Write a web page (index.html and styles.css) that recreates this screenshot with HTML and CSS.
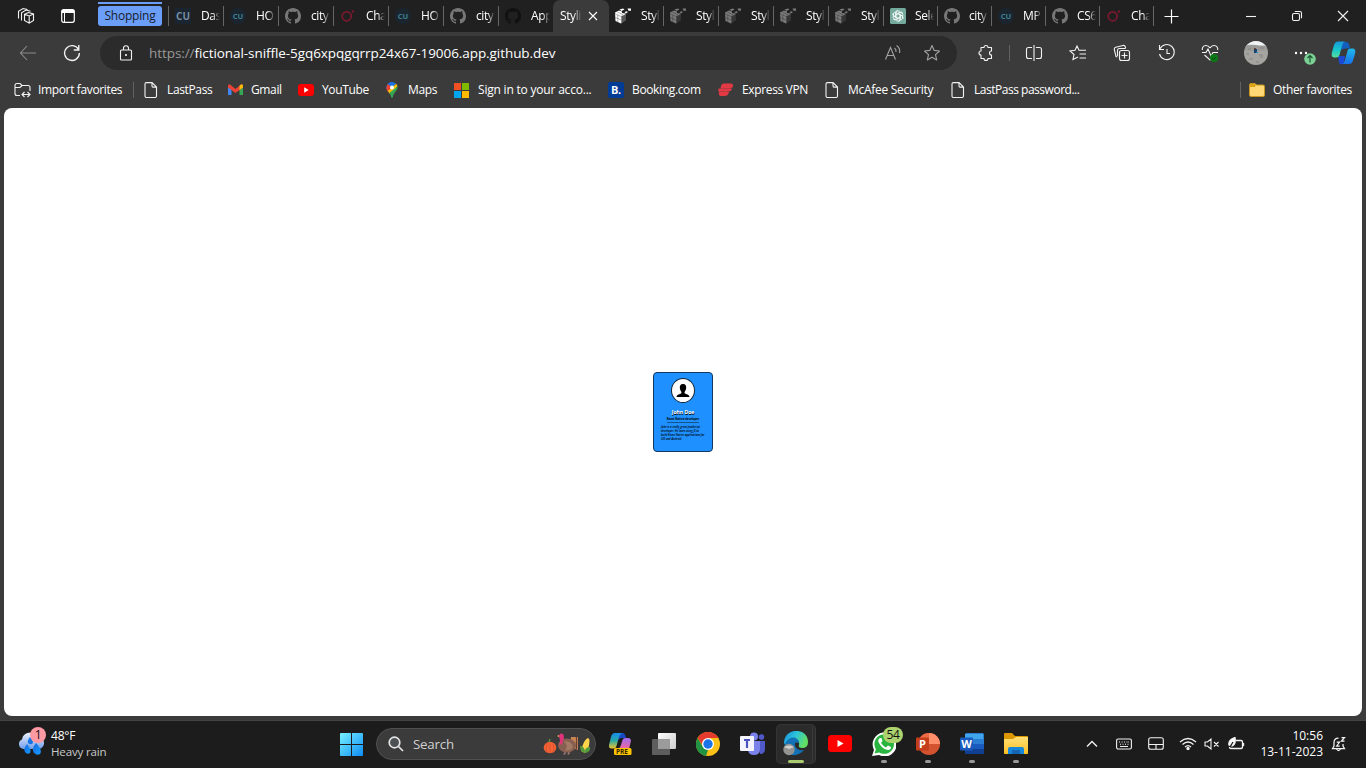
FILE: index.html
```html
<!DOCTYPE html>
<html lang="en">
<head>
<meta charset="utf-8">
<title>Styling</title>
<link rel="stylesheet" href="styles.css">
</head>
<body>
<svg class="defs" width="0" height="0" aria-hidden="true">
  <defs>
    <linearGradient id="gWin" x2="1" y2="1"><stop stop-color="#77f2ff"/><stop offset="1" stop-color="#0d8cf5"/></linearGradient>
    <linearGradient id="gTeal" x2="0" y2="1"><stop stop-color="#1797d8"/><stop offset=".5" stop-color="#17c5cf"/><stop offset="1" stop-color="#55df9a"/></linearGradient>
    <linearGradient id="gBlue" x2="0" y2="1"><stop stop-color="#1fbbe9"/><stop offset="1" stop-color="#1970ea"/></linearGradient>
    <linearGradient id="gPre" x2="0" y2="1"><stop stop-color="#168cec"/><stop offset=".5" stop-color="#2aa9a3"/><stop offset="1" stop-color="#f2c52c"/></linearGradient>
    <linearGradient id="gPink" x2="0" y2="1"><stop stop-color="#a16bf0"/><stop offset="1" stop-color="#ef679c"/></linearGradient>
    <linearGradient id="gEdge" x2="1" y2=".4"><stop stop-color="#168bd9"/><stop offset=".5" stop-color="#2bc3dc"/><stop offset="1" stop-color="#62df63"/></linearGradient>
    <linearGradient id="gCloud" x2="0" y2="1"><stop stop-color="#edf4ff"/><stop offset="1" stop-color="#729ce9"/></linearGradient>
    <linearGradient id="gDrop" x2="1" y2="1"><stop stop-color="#1768dc"/><stop offset="1" stop-color="#159cff"/></linearGradient>
    <linearGradient id="gFold" x2="0" y2="1"><stop stop-color="#ffdf74"/><stop offset="1" stop-color="#ffbf24"/></linearGradient>
    <linearGradient id="gGray" x2="1" y2="1"><stop stop-color="#fff"/><stop offset="1" stop-color="#ccc"/></linearGradient>
    <symbol id="github" viewBox="0 0 16 16"><path d="M8 0C3.58 0 0 3.58 0 8c0 3.54 2.29 6.53 5.47 7.59.4.07.55-.17.55-.38 0-.19-.01-.82-.01-1.49-2.01.37-2.53-.49-2.69-.94-.09-.23-.48-.94-.82-1.13-.28-.15-.68-.52-.01-.53.63-.01 1.08.58 1.23.82.72 1.21 1.87.87 2.33.66.07-.52.28-.87.51-1.07-1.78-.2-3.64-.89-3.64-3.95 0-.87.31-1.59.82-2.15-.08-.2-.36-1.02.08-2.12 0 0 .67-.21 2.2.82.64-.18 1.32-.27 2-.27s1.36.09 2 .27c1.53-1.04 2.2-.82 2.2-.82.44 1.1.16 1.92.08 2.12.51.56.82 1.27.82 2.15 0 3.07-1.87 3.75-3.65 3.95.29.25.54.73.54 1.48 0 1.07-.01 1.93-.01 2.2 0 .21.15.46.55.38A8.01 8.01 0 0 0 16 8c0-4.42-3.58-8-8-8z"/></symbol>
    <symbol id="cube" viewBox="0 0 16 16"><path fill="currentColor" d="M0 4.500 4 2.500l3 1v1.500l3.500.500v7L6 15.500l-5.500-2.500zM4.500 1.500 8 .500l1.500 1-3 1.500zM9.500 4l2-.800 1.500.800-2 1.500zM12.500.500H16v2.300h-2.500z"/><path d="M6.300 8.500l4.400-2v6.700L6.300 15.500z" fill="#202020" opacity=".75"/><path d="M0 5.700 6 8.500l4.500-2M.5 9.500 6 12M2.800 7v7M2.500 4.200l5.500 2.500" fill="none" stroke="#202020" stroke-width=".35"/></symbol>
    <symbol id="ring" viewBox="0 0 16 16"><circle cx="6.700" cy="8.300" r="4.500" fill="none" stroke="#7b1830" stroke-width="1.800"/><circle cx="13" cy="3.500" r="1.200" fill="#7b1830"/></symbol>
    <symbol id="file" viewBox="0 0 16 16"><path d="M3.500.6h5.500l4.500 4.500v8.900a1.500 1.500 0 0 1-1.500 1.500H3.500A1.500 1.500 0 0 1 2 14V2.100A1.500 1.500 0 0 1 3.500.6zM9 .8v3.300a1 1 0 0 0 1 1h3.300" fill="none" stroke="#f2f2f2" stroke-width="1.100"/></symbol>
  </defs>
</svg>

<header class="tabstrip">
  <div class="strip-icon"><svg class="line" width="18" height="18" viewBox="0 0 18 18"><path d="m7.500 7.300 4-1.800 5 1.500v6.500l-4.300 2.700-4.700-2.700zM7.500 7.300l4.700 1.700 4.300-2M12.200 9v7M4.500 13.500V5.700L9 3l4.500 1.300M1.500 11.500V4.200L6 1.500l4.500 1"/></svg></div>
  <div class="strip-icon"><svg width="16" height="16" viewBox="0 0 16 16"><rect x="1.700" y="1.700" width="12.600" height="12.600" rx="2" fill="none" stroke="#fff" stroke-width="1.200"/><path d="M1.500 3.500q0-2 2-2h9q2 0 2 2V5h-13zM4 5h1v9H4z" fill="#fff"/></svg></div>
  <div class="group"><span>Shopping</span></div>
  <nav class="tabs">
    <div class="tab"><i class="cu big">CU</i><span>Das</span></div>
    <div class="tab"><i class="cu">CU</i><span>HO</span></div>
    <div class="tab"><svg class="fav gh"><use href="#github"/></svg><span>city</span></div>
    <div class="tab"><svg class="fav"><use href="#ring"/></svg><span>Cha</span></div>
    <div class="tab"><i class="cu">CU</i><span>HO</span></div>
    <div class="tab"><svg class="fav gh"><use href="#github"/></svg><span>city</span></div>
    <div class="tab"><svg class="fav gh dark"><use href="#github"/></svg><span>App</span></div>
    <div class="tab active"><span>Styli</span><svg width="10" height="10" viewBox="0 0 10 10"><path d="m1 1 8 8M9 1 1 9" stroke="#fff" stroke-width="1.100"/></svg></div>
    <div class="tab nosep"><svg class="fav bright"><use href="#cube"/></svg><span>Styl</span></div>
    <div class="tab"><svg class="fav dim"><use href="#cube"/></svg><span>Styl</span></div>
    <div class="tab"><svg class="fav dim"><use href="#cube"/></svg><span>Styl</span></div>
    <div class="tab"><svg class="fav dim"><use href="#cube"/></svg><span>Styl</span></div>
    <div class="tab"><svg class="fav dim"><use href="#cube"/></svg><span>Styl</span></div>
    <div class="tab narrow"><svg class="fav" viewBox="0 0 16 16"><rect width="16" height="16" rx="1.500" fill="#74aa9c"/><g fill="none" stroke="#fff" stroke-width=".8"><path id="petal" d="M6 9V5.200a2.300 2.300 0 0 1 4.300-1.100M6 6.500l3.500-2q2-1 3.300.4"/><use href="#petal" transform="rotate(60 8 8)"/><use href="#petal" transform="rotate(120 8 8)"/><use href="#petal" transform="rotate(180 8 8)"/><use href="#petal" transform="rotate(240 8 8)"/><use href="#petal" transform="rotate(300 8 8)"/></g></svg><span>Sele</span></div>
    <div class="tab narrow"><svg class="fav gh"><use href="#github"/></svg><span>city</span></div>
    <div class="tab narrow"><i class="cu">CU</i><span>MP</span></div>
    <div class="tab narrow"><svg class="fav gh"><use href="#github"/></svg><span>CS6</span></div>
    <div class="tab narrow"><svg class="fav"><use href="#ring"/></svg><span>Cha</span></div>
    <div class="tab-end"></div>
  </nav>
  <div class="newtab"><svg width="15" height="15" viewBox="0 0 15 15"><path d="M7.500.5v14M.5 7.500h14" stroke="#fff" stroke-width="1.200"/></svg></div>
  <div class="window-controls">
    <svg class="line" width="12" height="12" viewBox="0 0 12 12"><path d="M1 6.500h10"/></svg>
    <svg class="line" width="12" height="12" viewBox="0 0 12 12"><rect x="1.500" y="3.500" width="7" height="7" rx="1.500"/><path d="M3.800 1.500H9q1.500 0 1.500 1.500v5.200"/></svg>
    <svg class="line" width="12" height="12" viewBox="0 0 12 12"><path d="m1 1 10 10M11 1 1 11"/></svg>
  </div>
</header>

<div class="toolbar">
  <div class="tool"><svg width="18" height="16" viewBox="0 0 18 16"><path d="M8 1 1.500 8 8 15M1.500 8H17" fill="none" stroke="#8b8b8b" stroke-width="1.100"/></svg></div>
  <div class="tool"><svg class="line thick" width="18" height="18" viewBox="0 0 18 18"><path d="M15.500 5.500A7.400 7.400 0 1 0 16.400 9M15.800 1v5h-5"/></svg></div>
  <div class="address">
    <svg class="line" width="14" height="18" viewBox="0 0 14 18"><rect x="1.500" y="6" width="11" height="10" rx="1"/><path d="M4.500 6V4.200a2.500 2.500 0 0 1 5 0V6"/><circle cx="7" cy="11" r=".5" fill="#fff"/></svg>
    <p><span>https://</span>fictional-sniffle-5gq6xpqgqrrp24x67-19006.app.github.dev</p>
    <svg class="line soft read" width="18" height="18" viewBox="0 0 18 18"><path d="M1.500 15.500 6.500 3.500l5 12M3.200 11.500h6.600M10.500 4q2 1.500 1.500 4M12.500 1.500q4 2.500 3 7.500"/></svg>
    <svg class="line soft" width="18" height="18" viewBox="0 0 18 18"><path d="m9 1.500 2.200 4.900 5.300.6-4 3.600 1.200 5.400L9 13.300 4.300 16l1.200-5.400-4-3.600 5.300-.6z" stroke-linejoin="round"/></svg>
  </div>
  <div class="tool after-address"><svg class="line" width="18" height="18" viewBox="0 0 18 18"><path d="M4 3.500h3a2 2 0 0 1 4 0h3.500V7a2 2 0 0 0 0 4v3.500H11a2 2 0 0 1-4 0H4V11a2 2 0 0 1 0-4z" stroke-linejoin="round"/></svg></div>
  <div class="divider"></div>
  <div class="tool"><svg class="line" width="18" height="18" viewBox="0 0 18 18"><path d="M9 1v16M7 3.500H3.500q-2 0-2 2v7q0 2 2 2H7M11 3.500h3.500q2 0 2 2v7q0 2-2 2H11"/></svg></div>
  <div class="tool"><svg class="line" width="18" height="18" viewBox="0 0 18 18"><path d="M9 13 4 15.500 5 10.500 1 7l5-.8L8 2l2 4.200H17M10.500 10H17M10.500 14H17"/></svg></div>
  <div class="tool"><svg class="line" width="18" height="18" viewBox="0 0 18 18"><rect x="6.500" y="6.500" width="10" height="10" rx="2"/><path d="M11.500 8.500v6M8.500 11.500h6M4.500 13 3 12.500 1.300 5.500q-.3-1.700 1.400-2.200L10 1.500q1.800-.4 2.300 1.300l.4 1.500M4.500 12V6.500q0-2 2-2h6"/></svg></div>
  <div class="tool history"><svg class="line" width="18" height="18" viewBox="0 0 18 18"><path d="M2 4.800A7.500 7.500 0 1 1 1.500 10M1.500 1v4.500H6M9 5v4.500h3"/></svg></div>
  <div class="tool overlay-host"><svg class="line" width="18" height="18" viewBox="0 0 18 18"><path d="M9 4Q7.500 1.500 5 1.500C2 1.500 1 4 1.300 6M9 4q1.500-2.500 4-2.500c3 0 4 2.500 3.700 4.500M1 8.500h4l2-3.500 3 7 2-3.500h5M3.500 11 9 16l3-3"/></svg><svg class="okay" width="8" height="8" viewBox="0 0 8 8"><circle cx="4" cy="4" r="4" fill="#0a7a16"/><path d="m2 4 1.500 1.500L6 3" fill="none" stroke="#063e0c"/></svg></div>
  <div class="tool avatar-slot"><svg class="avatar" width="24" height="24" viewBox="0 0 24 24"><path d="M0 0h24v24H0z" fill="#a5a4a1"/><path d="M0 0h24v5H0z" fill="#f0f3f5"/><path d="M0 5q5-2 12-1t12 0v5q-12 2-24 0z" fill="#9a9b98"/><path d="M2 13h3m10 1h4M5 18h4m3 3h3m1-5h3M4 8h3m9-1h4" stroke="#858481"/><path d="M10 8h3v4h-3z" fill="#16447a"/><path d="M12 11h2v1h-2z" fill="#1e8ccc"/><circle cx="11" cy="8" r="1" fill="#493027"/></svg></div>
  <div class="tool overlay-host"><svg width="14" height="4" viewBox="0 0 14 4"><g fill="#fff"><circle cx="2" cy="2" r="1.200"/><circle cx="7" cy="2" r="1.200"/><circle cx="12" cy="2" r="1.200"/></g></svg><svg class="update" width="12" height="12" viewBox="0 0 12 12"><circle cx="6" cy="6" r="5.800" fill="#7bd096"/><path d="M6 9.500v-7M3.500 5 6 2.500 8.500 5" fill="none" stroke="#1d5631" stroke-width="1.200"/></svg></div>
  <div class="copilot"><svg width="25" height="24" viewBox="0 0 25 24"><path d="M11 1h4q2.500 0 3.300 3L19 7.500h-5L9 9z" fill="#135fbd"/><path d="M7 15h7l-1 6q-.7 2.500-2.500 2.500Q8.500 23.500 8 21z" fill="#1b48d6"/><path d="M7 .5h7q-2 .5-3 4L8.500 14Q7.800 16.500 5 16.500H3.500Q0 16.500.8 12L3 4Q4 .5 7 .5z" fill="url(#gTeal)"/><path d="M18 23h-7q2-.5 3-4l2.500-9Q17 7.500 20 7.500h1.500q3.500 0 2.700 4.500L22 19.500q-1 3.500-4 3.500z" fill="url(#gBlue)"/></svg></div>
</div>

<nav class="bookmarks">
  <a class="w-import"><svg class="line" width="17" height="16" viewBox="0 0 17 16"><path d="M6 13.500H3q-2 0-2-2v-8q0-2 2-2h3l2 2h6q2 0 2 2V9M1 5.500h5l2-2M8 12.500h8M10.500 10 8 12.500l2.500 2.500m3-5 2.500 2.500-2.500 2.500"/></svg>Import favorites</a>
  <div class="mark-divider"></div>
  <a class="w-last"><svg width="16" height="16"><use href="#file"/></svg>LastPass</a>
  <a class="w-gmail"><svg width="15" height="12" viewBox="0 0 15 12"><path d="M0 2v9h3.500V5z" fill="#4285f4"/><path d="M11.500 5v6H15V2z" fill="#34a853"/><path d="M0 2q0-2 2-1.600L7.500 5 13 .4Q15 0 15 2v1.500L7.500 9 0 3.500z" fill="#ea4335"/><path d="M11.500 1.700 13 .4Q15 0 15 2v1.500l-3.500 2.600z" fill="#fbbc04"/></svg>Gmail</a>
  <a class="w-youtube"><svg width="16" height="12" viewBox="0 0 16 12"><rect width="16" height="12" rx="3" fill="#f00"/><path d="m6.200 3.300 4.500 2.700-4.500 2.700z" fill="#fff"/></svg>YouTube</a>
  <a class="w-maps"><svg width="16" height="16" viewBox="0 0 16 16"><path d="M8 0a5.500 5.500 0 0 0-4.300 9L12 1.700A5.400 5.400 0 0 0 8 0z" fill="#1a73e8"/><path d="M4 2 8 5.500 3.700 9.500A5.500 5.500 0 0 1 4 2z" fill="#ea4335"/><path d="m3.700 9 8.500-7.200q1.200 1.500 1.200 3L6 12z" fill="#fbbc04"/><path d="M13.400 4.500C14 9 9.500 10 8.700 15.500q-.7.700-1.400 0Q7 12.800 5.300 11z" fill="#34a853"/><circle cx="8" cy="5.500" r="2" fill="#fff"/></svg>Maps</a>
  <a class="w-ms"><svg width="15" height="15" viewBox="0 0 16 16"><path d="M0 0h7.500v7.500H0z" fill="#f25022"/><path d="M8.500 0H16v7.500H8.500z" fill="#7fba00"/><path d="M0 8.500h7.500V16H0z" fill="#00a4ef"/><path d="M8.500 8.500H16V16H8.500z" fill="#ffb900"/></svg>Sign in to your acco...</a>
  <a class="w-booking"><b class="booking">B.</b>Booking.com</a>
  <a class="w-express"><svg width="16" height="14" viewBox="0 0 16 14"><path d="M6 .5h6.500q3 0 2.500 2.700-.4 2-3 2H2.500Q3 .5 6 .5zM1 5.500h13q-.5 3-4 3H.5Q0 5.500 1 5.500zM1 8.800h10q-.5 4.200-4.500 4.200H3Q.3 13 1 8.800z" fill="#e23a45"/></svg>Express VPN</a>
  <a class="w-mcafee"><svg width="16" height="16"><use href="#file"/></svg>McAfee Security</a>
  <a class="w-password"><svg width="16" height="16"><use href="#file"/></svg>LastPass password...</a>
  <a class="other"><svg width="16" height="14" viewBox="0 0 16 14"><path d="M.5 2Q.5.500 2 .500h4l1.500 1.500H14q1.500 0 1.500 1.500v8.500q0 1.500-1.500 1.500H2Q.5 13.500.5 12z" fill="#ffd875" stroke="#c6961f"/><path d="M1 1h5l1 1-1 2H1z" fill="#dda319"/></svg>Other favorites</a>
</nav>

<main class="viewport">
  <article class="card">
    <div class="portrait"><svg width="16" height="16" viewBox="0 0 16 16"><path d="M8 1c-2.600 0-3.600 2-3.100 4.500.3 1.700 1 2.600 1.500 3.500v1.200C5 11.200 1.600 11.500 1.500 14h13c-.1-2.500-3.500-2.800-4.900-3.800V9c.5-.9 1.200-1.800 1.500-3.500C11.600 3 10.600 1 8 1z"/></svg></div>
    <h1>John Doe</h1>
    <h2>React Native developer</h2>
    <p>John is a really great JavaScript<br>developer. He loves using JS to<br>build React Native applications for<br>iOS and Android</p>
  </article>
</main>

<footer class="taskbar">
  <div class="weather">
    <div class="weather-icon"><svg width="26" height="24" viewBox="0 0 26 24"><path d="M5 17a5 5 0 0 1-1-9.500A8 8 0 0 1 19 5a6 6 0 0 1 2 12z" fill="url(#gCloud)"/><path d="M9 12q-4 5-2 8 2 3 5 1 2-3-3-9z" fill="url(#gDrop)"/><path d="M18 11q-5 6-2 10 3 3 6 1 3-4-4-11z" fill="url(#gDrop)"/><path d="M12 5q-4 5-1 7 4 1 4-2 0-2-3-5z" fill="#1675e4"/></svg><b>1</b></div>
    <p>48°F<br><span>Heavy rain</span></p>
  </div>
  <div class="start"><svg width="23" height="23" viewBox="0 0 23 23"><path d="M0 1q0-1 1-1h10v11H0zm12-1h10q1 0 1 1v10H12zM0 12h11v11H1q-1 0-1-1zm12 0h11v10q0 1-1 1H12z" fill="url(#gWin)"/></svg></div>
  <div class="search">
    <svg width="16" height="16" viewBox="0 0 16 16"><circle cx="6.500" cy="6.500" r="5.300" fill="#4b5154" stroke="#e5e5e5" stroke-width="1.700"/><path d="m10.500 10.500 4.500 4.500" stroke="#e5e5e5" stroke-width="1.700"/></svg>
    <span>Search</span>
    <svg class="harvest" width="48" height="24" viewBox="0 0 48 24"><ellipse cx="7" cy="15.500" rx="6.300" ry="5.800" fill="#f16335"/><path d="M7 11v10M4 11q-2 5 0 10M10 11q2 5 0 10" fill="none" stroke="#d94b2b" stroke-width=".7"/><path d="m6 10 1-3" stroke="#588d3b" stroke-width="1.500"/><path d="M28 5h7v13l-8-3z" fill="#c98554"/><path d="M33.500 5v12" stroke="#673e36" stroke-width="1.200"/><ellipse cx="24" cy="13.500" rx="9" ry="7" fill="#876052"/><path d="M21 9q8 0 9 6-3 5-8 3 4-4-1-9z" fill="#a37a63"/><path d="M16 13q2-4 0-8 0-5 4-3 2 3 0 7l-1 3z" fill="#de3279"/><path d="m16 3-2 1 2 1z" fill="#ebbc43"/><path d="M22 20v2h-1.500M26 20v2h-1.500" fill="none" stroke="#c28b89"/><path d="M38 19q3-12 7-13 3 1 0 11l-3 4z" fill="#ffd44a"/><path d="M37 14q5 0 5 7-5-1-5-7zM47 15q-6 0-5 6 6-1 5-6z" fill="#549c3b"/></svg>
  </div>
  <div class="apps">
    <div class="app"><svg width="24" height="24" viewBox="0 0 24 24"><path d="M11 1h4q2 0 3 5h-5l-4 2z" fill="#1749c4"/><path d="M7 1h7q-2 1-3 4L8.500 14q-.7 2.500-3 2.500h-2Q.500 16.500 1 13l2-8q1-4 4-4z" fill="url(#gPre)"/><path d="M12 17h-2q2-1 3-4l1.500-5q.6-2 3-2H20q3.500 0 2.800 3.500L21 17z" fill="url(#gPink)"/><path d="M7.500 16H22q1.500 0 1.500 1.500v4Q23.500 23 22 23H7.500Q6 23 6 21.500v-4Q6 16 7.500 16z" fill="#ffc400"/><text x="8" y="22" class="pre">PRE</text></svg></div>
    <div class="app"><svg width="24" height="24" viewBox="0 0 24 24"><rect y="7" width="18" height="16" rx="1" fill="#5d5d5d"/><rect x="6" y="1" width="18" height="16" rx="1" fill="url(#gGray)"/><path d="M6 7h12v10H6z" fill="#9b9b9b"/></svg></div>
    <div class="app"><svg width="24" height="24" viewBox="0 0 24 24"><circle cx="12" cy="12" r="12" fill="#fbc116"/><path d="M1.600 6a12 12 0 0 1 20.800 0H12L7 14z" fill="#e33b2e"/><path d="M1.600 6 7 15l5 3-2 6A12 12 0 0 1 1.600 6z" fill="#229342"/><circle cx="12" cy="12" r="6" fill="#fff"/><circle cx="12" cy="12" r="4.700" fill="#1a73e8"/></svg></div>
    <div class="app"><svg width="25" height="24" viewBox="0 0 25 24"><circle cx="14" cy="4.500" r="4" fill="#7b83eb"/><circle cx="21.500" cy="5" r="2.800" fill="#5059c9"/><path d="M18 9h7v8q0 5-5 5z" fill="#5059c9"/><path d="M8 9h12v8q0 6-6 6t-6-6z" fill="#7b83eb"/><rect y="4" width="14" height="15" rx="1" fill="#f5f5ff"/><path d="M4 8h6M7 8v8" stroke="#4b53bc" stroke-width="2.200"/></svg></div>
    <div class="app selected"><svg width="25" height="25" viewBox="0 0 25 25"><path d="M1 12C1-4 25-4 25 11q0 6-6 6-4 0-3-3 1-5-4-6-7 0-9 8z" fill="url(#gEdge)"/><path d="M2 14C4 5 15 4 16 12q-5-2-4 3 2 5 9 4-5 6-12 5Q1 22 2 14z" fill="#1272b5"/><circle cx="6" cy="18.500" r="5.700" fill="#939391"/><path d="M1 16q5-3 10 0l-5 2z" fill="#d1d1cf"/></svg></div>
    <div class="app"><svg width="24" height="17" viewBox="0 0 24 17"><rect width="24" height="17" rx="3.500" fill="#f00"/><path d="m9.500 5 6 3.500-6 3.500z" fill="#fff"/></svg></div>
    <div class="app running"><svg width="24" height="24" viewBox="0 0 24 24"><path d="m0 24 2-6A12 12 0 1 1 7 23z" fill="#fff"/><path d="m2.500 21.500 1.400-4.200A9.800 9.800 0 1 1 7.200 20.500z" fill="#2ab540"/><path d="M8 6q-3 2-1 5 3 6 9 7 3 0 3-3l-3-1.600-2 2Q11 14 9 11l1.500-2L9.500 6z" fill="#fff"/></svg><b class="count">54</b></div>
    <div class="app running"><svg width="24" height="24" viewBox="0 0 24 24"><circle cx="13" cy="12" r="11" fill="#d35230"/><path d="M13 1a11 11 0 0 1 11 11H13z" fill="#ff8f6b"/><path d="M2 12A11 11 0 0 1 13 1v11z" fill="#ed6c47"/><rect y="5.500" width="13" height="13" rx="1" fill="#c43e1c"/><text x="3" y="16" class="office">P</text></svg></div>
    <div class="app running"><svg width="24" height="24" viewBox="0 0 24 24"><rect x="5" y="1" width="19" height="21" rx="1.500" fill="#2b7cd3"/><path d="M5 2h18v5H5z" fill="#41a5ee"/><path d="M5 12h19v5H5z" fill="#185abd"/><path d="M5 17h19v5H5z" fill="#103f91"/><rect y="5.500" width="13" height="13" rx="1" fill="#185abd"/><text x="1.200" y="16" class="office">W</text></svg></div>
    <div class="app running"><svg width="25" height="24" viewBox="0 0 25 24"><path d="M0 2q0-1 1-1h7l3 3h12q1 0 1 1v17H0z" fill="#dc9700"/><path d="M0 7h9l3-2h12v15q0 2-2 2H2q-2 0-2-2z" fill="url(#gFold)"/><path d="M4 22v-5q0-2 2-2h12q2 0 2 2v5z" fill="#1687d9"/><path d="M8 18h8v4H8z" fill="#1565b5"/></svg></div>
  </div>
  <div class="tray">
    <svg class="line thick" width="12" height="8" viewBox="0 0 12 8"><path d="m1 6.500 5-5 5 5"/></svg>
    <svg class="line keyboard" width="16" height="12" viewBox="0 0 16 12"><rect x=".6" y="1" width="14.800" height="10" rx="1.500"/><path d="M3 4h1m1.500 0h1M8 4h1m1.500 0h1m.8 0h.7M4 6.200h1m1.500 0h1M9 6.200h1m1.500 0h1M4 8.500h8"/></svg>
    <svg class="line touchpad" width="16" height="13" viewBox="0 0 16 13"><rect x=".7" y=".7" width="14.600" height="11.600" rx="2"/><path d="M1 7.500h14M8 7.500V12"/></svg>
    <svg class="line thick wifi" width="18" height="13" viewBox="0 0 18 13"><path d="M1 5q8-7 16 0M3.500 7.500q5.500-5 11 0M6 10q3-2.700 6 0"/><circle cx="9" cy="11.500" r="1" fill="#fff"/></svg>
    <svg class="line sound" width="16" height="12" viewBox="0 0 16 12"><path d="M1 4h2.500L7 1v10L3.500 8H1zM10 4l4.500 4.500M14.500 4 10 8.500"/></svg>
    <svg class="line thick battery" width="17" height="14" viewBox="0 0 17 14"><path d="M8 3.500h5q1.500 0 1.500 1.500v5q0 1.500-1.500 1.500H3q-1.500 0-1.500-1.500M15.500 6v3"/><path d="M1 8Q0 3 7 .5q1 6-2 8-1.500 1-4-.5z" fill="#fff"/><path d="m2 10 3-5" stroke="#1c1c1c"/></svg>
    <p class="clock">10:56<br>13-11-2023</p>
    <svg class="line bell" width="15" height="16" viewBox="0 0 15 16"><path d="M7.500 2Q3 2 3 6.500V10l-1.500 2.500h12L12 10V8M5.500 13q2 3 4 0M5.700 6h2.800l-2.800 4h3M10.500 1.500h3L10.500 5h3" stroke-width="1.250"/></svg>
  </div>
</footer>
</body>
</html>
```
FILE: styles.css
```css
* { box-sizing: border-box; }
body { margin: 0; width: 1366px; height: 768px; overflow: hidden; display: flex; flex-direction: column; background: #3b3b3b; color: #fff; font: 12px/16px "Open Sans", "Noto Sans", sans-serif; }
svg { display: block; flex: none; }
p, h1, h2 { margin: 0; }
.defs { position: absolute; }
.line { fill: none; stroke: #f2f2f2; stroke-width: 1.1; }
.line.thick { stroke-width: 1.35; }
.line.soft { stroke: #a2a2a2; }

.tabstrip { height: 32px; flex: none; display: flex; background: #202020; }
.strip-icon { width: 42px; padding-left: 10px; display: flex; align-items: center; justify-content: center; }
.group { width: 64px; height: 26px; margin: 2px 6px 0 14px; border-top: 2px solid #6b9ef8; padding-top: 2px; }
.group span { display: block; height: 20px; background: #6b9ef8; color: #17202e; border-radius: 3px; line-height: 20px; text-align: center; letter-spacing: -.2px; }
.tabs { display: flex; }
.tab { width: 55px; height: 20px; margin-top: 6px; border-left: 1px solid #666; padding-left: 6px; display: flex; align-items: center; }
.tab.narrow { width: 54px; }
.tab span { width: 19px; margin-left: 10px; overflow: hidden; white-space: nowrap; letter-spacing: -.4px; -webkit-mask-image: linear-gradient(90deg, #000 60%, transparent); mask-image: linear-gradient(90deg, #000 60%, transparent); }
.tab.narrow span { margin-left: 9px; }
.tab.active { width: 56px; height: 32px; margin: 0 -1px 0 0; padding-left: 7px; background: #3b3b3b; border: 0; border-radius: 7px 7px 0 0; }
.tab.active span { width: 22px; margin: 0 6px 0 0; }
.tab.nosep { border-color: transparent; }
.tab-end { width: 1px; height: 20px; margin: 6px -1px 0 0; background: #666; }
.fav { width: 16px; height: 16px; }
.gh { fill: #777; }
.gh.dark { fill: #111; }
.bright { color: #fff; }
.dim { color: #7a7a7a; }
.cu { width: 16px; height: 16px; flex: none; background: #1a2530; color: #3d8091; border-radius: 8px; font: bold 7.5px/16px "Open Sans", sans-serif; text-align: center; }
.cu.big { border-radius: 0; font-size: 10px; color: #778ca0; }
.newtab { width: 36px; display: flex; align-items: center; justify-content: center; }
.window-controls { margin-left: auto; display: flex; align-items: center; gap: 34px; padding-right: 17px; }

.toolbar { height: 42px; flex: none; display: flex; align-items: center; padding-left: 6px; }
.tool { width: 44px; height: 34px; display: flex; align-items: center; justify-content: center; flex: none; }
.address { width: 857px; height: 34px; margin-left: 6px; padding: 0 16px 0 19px; display: flex; align-items: center; border-radius: 17px; background: #2b2b2b; }
.address p { margin-left: 16px; width: 717px; font-size: 13.5px; letter-spacing: -.07px; white-space: nowrap; }
.address p span { color: #999; }
.address .read { margin: 0 21px 0 auto; }
.after-address { margin-left: 7px; }
.divider { width: 1px; height: 16px; margin: 0 2px 0 1px; background: #626262; }
.history { padding-left: 2px; }
.overlay-host { position: relative; }
.okay { position: absolute; left: 22px; top: 18px; }
.avatar-slot { margin: 0 1px 0 2px; }
.avatar { border-radius: 50%; }
.update { position: absolute; left: 25px; top: 17px; }
.copilot { width: 41px; display: flex; justify-content: center; }

.bookmarks { height: 34px; flex: none; display: flex; align-items: center; padding: 0 14px 2px; letter-spacing: -.36px; }
.bookmarks a { display: flex; align-items: center; gap: 8px; white-space: nowrap; flex: none; }
.mark-divider { width: 1px; height: 16px; background: #626262; margin-right: 9px; }
.bookmarks .w-import { width: 119px; gap: 7px; }
.w-last { width: 85px; }
.w-gmail { width: 70px; }
.w-youtube { width: 86px; }
.w-maps { width: 70px; }
.bookmarks .w-ms { width: 154px; gap: 9px; letter-spacing: -.2px; }
.w-booking { width: 110px; }
.w-express { width: 106px; }
.w-mcafee { width: 126px; letter-spacing: -.28px; }
.w-password { letter-spacing: -.48px; }
.booking { width: 16px; height: 16px; background: #003b95; border-radius: 2px; text-align: center; font-size: 11px; }
.bookmarks .other { margin-left: auto; border-left: 1px solid #626262; padding-left: 8px; width: 112px; }

.viewport { height: 608px; flex: none; margin: 0 4px; display: flex; align-items: center; justify-content: center; background: #fff; border-radius: 8px; }
.card { width: 60px; height: 80px; background: #1e90ff; border: 1px solid #14385e; border-radius: 4px; padding-top: 5px; display: flex; flex-direction: column; align-items: center; color: #000; }
.portrait { width: 24px; height: 25px; flex: none; display: flex; align-items: center; justify-content: center; background: #fff; border: 1px solid #123; border-radius: 50%; fill: #000; }
.card h1 { color: #fff; margin-top: 6px; font-size: 5px; line-height: 7px; text-shadow: .5px .5px .5px #000; white-space: nowrap; }
.card h2 { margin-top: 1px; font-size: 2.8px; line-height: 4px; padding-bottom: 1px; border-bottom: 1px solid #14548f; white-space: nowrap; }
.card p { align-self: flex-start; margin: 2px 0 0 7px; font-size: 2.75px; font-weight: 600; font-style: italic; line-height: 4px; white-space: nowrap; }

.taskbar { height: 48px; flex: none; margin-top: 4px; padding-bottom: 2px; border-top: 1px solid #444; background: #1c1c1c; display: flex; align-items: center; }
.weather { width: 329px; padding-left: 18px; display: flex; align-items: center; letter-spacing: -.2px; }
.weather-icon { width: 33px; position: relative; }
.weather-icon b { position: absolute; left: 12px; top: -5px; width: 16px; height: 16px; border-radius: 50%; background: #ff99a4; color: #111; font-weight: 400; text-align: center; }
.weather span { color: #c8c8c8; font-size: 11.6px; }
.start { width: 44px; display: flex; justify-content: center; padding-top: 1px; }
.search { width: 220px; height: 32px; margin-left: 3px; padding: 0 4px 0 11px; display: flex; align-items: center; background: #3b3b3b; border: 1px solid #505050; border-radius: 16px; }
.search span { margin-left: 9px; color: #d0d0d0; font-size: 13.3px; letter-spacing: -.2px; }
.harvest { margin-left: auto; }
.apps { display: flex; margin-left: 2px; }
.app { position: relative; width: 44px; height: 40px; display: flex; align-items: center; justify-content: center; }
.app.selected { width: 40px; margin: 0 2px; padding-left: 2px; background: #2b2b2b; border: 1px solid #343434; border-right: 4px double #3b3b3b; border-radius: 5px; }
.app.selected::after { content: ""; position: absolute; left: 11px; bottom: 0; width: 16px; height: 3px; border-radius: 2px; background: #aacb70; }
.running::after { content: ""; position: absolute; left: 19px; bottom: 1px; width: 6px; height: 3px; border-radius: 2px; background: #999; }
.count { position: absolute; left: 21px; top: 3px; width: 20px; height: 16px; border-radius: 8px; background: #acd36e; color: #111; font-weight: 400; text-align: center; letter-spacing: -.3px; }
.pre { font: bold 6.5px "Open Sans", sans-serif; fill: #322600; }
.office { font: bold 11px "Open Sans", sans-serif; fill: #fff; }
.tray { margin-left: auto; display: flex; align-items: center; padding-right: 20px; }
.keyboard { margin-left: 18px; }
.touchpad { margin-left: 16px; }
.wifi { margin-left: 15px; }
.sound { margin-left: 7px; }
.battery { margin-left: 8px; }
.clock { width: 78px; text-align: right; letter-spacing: 0; }
.bell { margin-left: 8px; }
```
